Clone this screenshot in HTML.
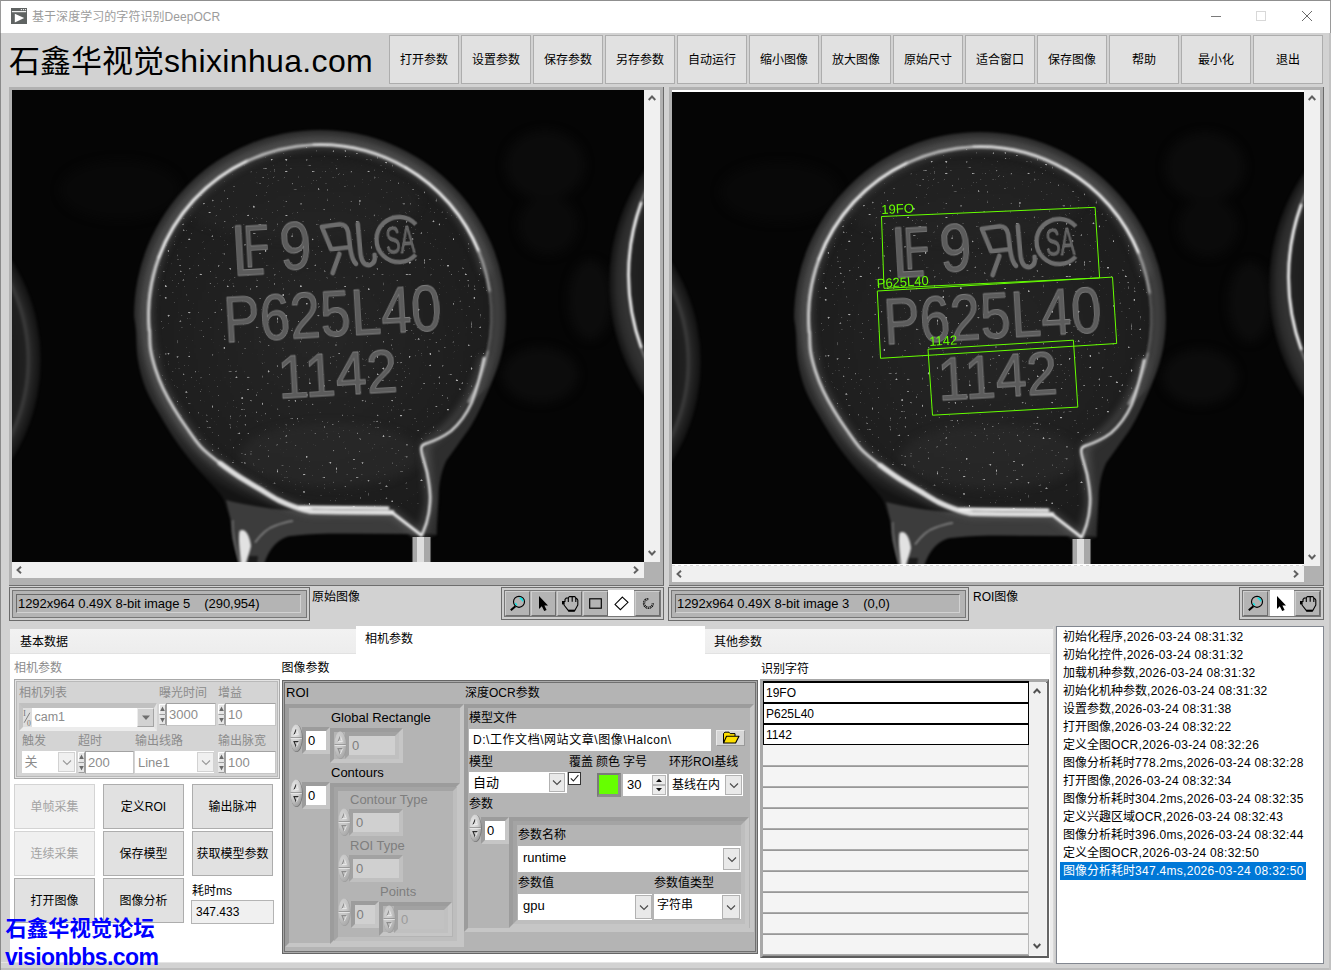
<!DOCTYPE html>
<html lang="zh-CN"><head><meta charset="utf-8"><title>DeepOCR</title>
<style>
*{box-sizing:border-box;margin:0;padding:0}
html,body{width:1331px;height:970px;overflow:hidden;background:#d2d2d2}
body{position:relative;font-family:"Liberation Sans","Noto Sans CJK SC",sans-serif;font-size:12px;color:#000;line-height:1}
.a{position:absolute}
.t{position:absolute;white-space:nowrap;line-height:16px;height:16px}
.tb{position:absolute;background:#e1e1e1;border:1px solid #adadad;text-align:center;font-size:12px;white-space:nowrap}
.dis{color:#8c8c8c}
</style></head>
<body>
<div class="a" style="left:0px;top:0px;width:1331px;height:970px;background:#d2d2d2"></div>
<div class="a" style="left:0px;top:0px;width:1331px;height:33px;background:#fff;border-top:1px solid #8f8f8f;border-left:1px solid #9a9a9a;border-right:1px solid #9a9a9a"></div>
<div class="a" style="left:0px;top:33px;width:1px;height:937px;background:#8a8a8a"></div>
<svg class="a" style="left:11px;top:8px" width="16" height="16" viewBox="0 0 16 16"><rect x="0" y="0" width="16" height="16" fill="#5f6362"/><circle cx="10.4" cy="1.6" r="0.7" fill="#fff"/><circle cx="12.5" cy="1.6" r="0.7" fill="#fff"/><circle cx="14.5" cy="1.6" r="0.7" fill="#fff"/><rect x="0.9" y="3.1" width="14.2" height="1.1" fill="#fff"/><path d="M3.8 5.8 L13.2 9.9 L3.8 14.4 Z" fill="#fff"/></svg>
<div class="t" style="left:32px;top:9px;color:#9c9c9c;font-size:12px;letter-spacing:0.05px">基于深度学习的字符识别DeepOCR</div>
<div class="a" style="left:1211px;top:16px;width:10px;height:1px;background:#7a7a7a"></div>
<div class="a" style="left:1256px;top:11px;width:10px;height:10px;border:1px solid #d8d8d8"></div>
<svg class="a" style="left:1301px;top:10px" width="12" height="12" viewBox="0 0 12 12"><path d="M1 1 L11 11 M11 1 L1 11" stroke="#6a6a6a" stroke-width="1" fill="none"/></svg>
<div class="a" style="left:9px;top:39px;font-size:32px;line-height:44px;height:44px;white-space:nowrap"><span style="font-size:31px">石鑫华视觉</span><span style="letter-spacing:0.35px">shixinhua.com</span></div>
<div class="tb" style="left:389px;top:35px;width:70px;height:49px;line-height:49px">打开参数</div>
<div class="tb" style="left:461px;top:35px;width:70px;height:49px;line-height:49px">设置参数</div>
<div class="tb" style="left:533px;top:35px;width:70px;height:49px;line-height:49px">保存参数</div>
<div class="tb" style="left:605px;top:35px;width:70px;height:49px;line-height:49px">另存参数</div>
<div class="tb" style="left:677px;top:35px;width:70px;height:49px;line-height:49px">自动运行</div>
<div class="tb" style="left:749px;top:35px;width:70px;height:49px;line-height:49px">缩小图像</div>
<div class="tb" style="left:821px;top:35px;width:70px;height:49px;line-height:49px">放大图像</div>
<div class="tb" style="left:893px;top:35px;width:70px;height:49px;line-height:49px">原始尺寸</div>
<div class="tb" style="left:965px;top:35px;width:70px;height:49px;line-height:49px">适合窗口</div>
<div class="tb" style="left:1037px;top:35px;width:70px;height:49px;line-height:49px">保存图像</div>
<div class="tb" style="left:1109px;top:35px;width:70px;height:49px;line-height:49px">帮助</div>
<div class="tb" style="left:1181px;top:35px;width:70px;height:49px;line-height:49px">最小化</div>
<div class="tb" style="left:1253px;top:35px;width:70px;height:49px;line-height:49px">退出</div>
<div class="a" style="left:9px;top:87px;width:655px;height:499px;background:#b1b1b1;border-right:1px solid #6a6a6a;border-bottom:1px solid #6e6e6e"></div>
<div class="a" style="left:12px;top:90px;width:632px;height:472px;overflow:hidden;background:#050505"><svg class="a" style="left:0;top:0" width="632" height="472" viewBox="0 0 632 472">
<defs>
<radialGradient id="gLd" cx="320" cy="316" r="198" gradientUnits="userSpaceOnUse">
<stop offset="0" stop-color="#292929"/><stop offset="0.55" stop-color="#252525"/><stop offset="0.84" stop-color="#222"/><stop offset="0.868" stop-color="#3a3a3a"/><stop offset="0.9" stop-color="#3e3e3e"/><stop offset="0.94" stop-color="#2a2a2a"/><stop offset="1" stop-color="#141414"/></radialGradient>
<radialGradient id="gLf" cx="320" cy="336" r="200" gradientUnits="userSpaceOnUse"><stop offset="0" stop-color="#262626"/><stop offset="0.6" stop-color="#202020"/><stop offset="1" stop-color="#1c1c1c"/></radialGradient>
<radialGradient id="gLs" cx="-145" cy="360" r="186" gradientUnits="userSpaceOnUse"><stop offset="0.8" stop-color="#1b1b1b"/><stop offset="0.915" stop-color="#202020"/><stop offset="0.93" stop-color="#3c3c3c"/><stop offset="0.95" stop-color="#262626"/><stop offset="1" stop-color="#101010"/></radialGradient>
<radialGradient id="gLr" cx="807" cy="283" r="198" gradientUnits="userSpaceOnUse"><stop offset="0.8" stop-color="#1c1c1c"/><stop offset="0.89" stop-color="#222"/><stop offset="0.92" stop-color="#343434"/><stop offset="0.96" stop-color="#2a2a2a"/><stop offset="1" stop-color="#121212"/></radialGradient>
<filter id="gLb" color-interpolation-filters="sRGB" x="-10%" y="-10%" width="120%" height="120%"><feGaussianBlur stdDeviation="0.9"/></filter>
<filter id="gLb2" color-interpolation-filters="sRGB" x="-20%" y="-20%" width="140%" height="140%"><feGaussianBlur stdDeviation="4"/></filter>
<filter id="gLt" color-interpolation-filters="sRGB" x="-5%" y="-5%" width="110%" height="110%"><feGaussianBlur stdDeviation="0.6"/></filter>
<filter id="gLn" color-interpolation-filters="sRGB" x="0" y="0" width="100%" height="100%"><feTurbulence type="fractalNoise" baseFrequency="0.34" numOctaves="1" seed="11" result="n"/><feColorMatrix in="n" type="matrix" values="0 0 0 0 1  0 0 0 0 1  0 0 0 0 1  10 0 0 0 -7.05" result="m"/><feGaussianBlur in="m" stdDeviation="0.45"/></filter>
<filter id="gLn2" color-interpolation-filters="sRGB" x="0" y="0" width="100%" height="100%"><feTurbulence type="fractalNoise" baseFrequency="0.8" numOctaves="1" seed="3" result="n"/><feColorMatrix in="n" type="matrix" values="0 0 0 0 1  0 0 0 0 1  0 0 0 0 1  0 2 0 0 -0.9"/></filter>
<clipPath id="gLc"><path d="M153 331 A168.5 168.5 0 1 1 484.75 351 C476 392 459 424 423 441 L427 503 L420 530 L392 509 L300 505 C262 487 225 462 205 447 C185 425 170 400 160 372 C156 358 153 345 153 331 Z"/></clipPath>
</defs>
<rect width="632" height="472" fill="#050505"/>
<g transform="translate(-12,-90)">
<g filter="url(#gLb2)"><ellipse cx="545" cy="165" rx="40" ry="35" fill="#0b0b0b"/><ellipse cx="548" cy="225" rx="30" ry="30" fill="#0a0a0a"/><ellipse cx="590" cy="300" rx="22" ry="40" fill="#0c0c0c"/><ellipse cx="540" cy="375" rx="38" ry="28" fill="#0c0c0c"/><ellipse cx="120" cy="190" rx="60" ry="30" fill="#080808"/></g>
<g filter="url(#gLb)"><circle cx="-145" cy="360" r="186" fill="url(#gLs)"/></g>
<g filter="url(#gLb)"><circle cx="807" cy="283" r="198" fill="url(#gLr)"/>
<path d="M650 181 A213 213 0 0 0 650 369" fill="none" stroke="#707070" stroke-width="2.6"/><path d="M641.5 202 A213 213 0 0 0 641.5 348" fill="none" stroke="#f2f2f2" stroke-width="2.8"/></g>
<g filter="url(#gLb)"><path d="M134 316 A186 186 0 0 1 506 316 C506 345 499 366 491 384 C484 400 478 414 471 426 C462 440 452 452 446 461 C441 472 439 484 438.5 497 L436.5 535 L431 538 L431 564 L412 564 L412 538 L408 534 C400 533 394 532.5 390 532.5 L330 533.5 C310 534 300 535 290 536 C280 538 270 546 264 564 L239 564 L232.4 538.6 L230.4 519 L230.4 519.0 C229.8 517.5 228.4 513.8 227.0 510.0 C225.6 506.2 225.1 501.4 222.0 496.5 C218.9 491.6 213.3 486.4 208.4 480.8 C203.5 475.2 198.3 470.1 192.7 463.2 C187.1 456.3 180.6 447.9 175.0 439.7 C169.4 431.5 164.3 422.7 159.4 414.2 C154.5 405.7 149.3 397.9 145.7 388.8 C142.1 379.7 139.4 369.2 137.8 359.4 C136.2 349.6 136.5 337.2 135.9 330.0 C135.3 322.8 134.3 318.3 134.0 316.0 Z" fill="url(#gLd)"/>
<path d="M149.6 330 A171.5 171.5 0 1 1 487.75 351.66 C480 378 476 392 471.5 403 C466 415 459 424 451 431 C443 437 434 441 425 444 L422.5 456 L427 472 C429.5 485 431 494 430 503 C429.5 512 428 518 426.5 523 L422 535 L392 512.5 L338 512 L312.0 511.5 C309.8 511.0 304.0 510.2 298.5 508.3 C293.0 506.4 285.4 503.7 278.9 500.4 C272.4 497.1 265.8 492.6 259.3 488.7 C252.8 484.8 246.2 481.2 239.7 477.0 C233.1 472.8 226.4 468.1 220.0 463.2 C213.6 458.3 207.0 453.4 201.5 447.5 C196.0 441.6 191.4 434.5 186.8 428.0 C182.2 421.5 177.9 414.9 174.0 408.4 C170.1 401.9 166.4 395.3 163.3 388.8 C160.2 382.3 157.6 375.7 155.5 369.2 C153.4 362.7 151.6 356.1 150.6 349.6 C149.6 343.1 149.8 333.3 149.6 330.0 Z" fill="url(#gLf)"/>
<path d="M226 500 C245 505 270 509 290 510 L392 513 L418 536 L408 534 L330 533.5 C310 534 300 535 290 536 C280 538 270 546 264 564 L239 564 L232.4 538.6 L230.4 519 Z" fill="#3c3c3c"/>
<path d="M426 446 C452 434 466 416 474 400 L489 386 C478 412 462 440 446 461 C441 472 439 484 438.5 497 L436.5 535 L424 533 C430 520 432 505 430 490 Z" fill="#2e2e2e"/>
</g>
<g filter="url(#gLb2)" clip-path="url(#gLc)"><ellipse cx="330" cy="455" rx="90" ry="32" fill="#323232" opacity="0.4"/><ellipse cx="300" cy="200" rx="120" ry="40" fill="#2a2a2a" opacity="0.3"/></g>
<rect x="140" y="136" width="360" height="372" filter="url(#gLn)" clip-path="url(#gLc)" opacity="0.62"/>
<g filter="url(#gLb2)" fill="none" stroke-linecap="round" opacity="0.55"><path d="M154.3 360.4 A171.5 171.5 0 0 1 485.7 271.6" stroke="#8a8a8a" stroke-width="5" opacity="1"/><path d="M149.6 330.0 C149.8 333.3 149.6 343.1 150.6 349.6 C151.6 356.1 153.4 362.7 155.5 369.2 C157.6 375.7 160.2 382.3 163.3 388.8 C166.4 395.3 170.1 401.9 174.0 408.4 C177.9 414.9 182.2 421.5 186.8 428.0 C191.4 434.5 196.0 441.6 201.5 447.5 C207.0 453.4 213.6 458.3 220.0 463.2 C226.4 468.1 233.1 472.8 239.7 477.0 C246.2 481.2 252.8 484.8 259.3 488.7 C265.8 492.6 272.4 497.1 278.9 500.4 C285.4 503.7 293.0 506.4 298.5 508.3 C304.0 510.2 309.8 511.0 312.0 511.5 L392 512 L421 535 M484 358 C476 392 459 424 425 444 L430 503 L422 535" stroke="#8a8a8a" stroke-width="5"/></g>
<g filter="url(#gLb)" fill="none" stroke-linecap="round">
<path d="M149.1 330.1 A171.5 171.5 0 0 1 489.8 292.1" stroke="#6e6e6e" stroke-width="3.2" opacity="1"/>
<path d="M149.1 330.1 A171.5 171.5 0 0 1 158.8 257.3" stroke="#cfcfcf" stroke-width="2.9" opacity="1"/>
<path d="M158.8 257.3 A171.5 171.5 0 0 1 247.5 160.6" stroke="#e8e8e8" stroke-width="3" opacity="1"/>
<path d="M247.5 160.6 A171.5 171.5 0 0 1 314.0 144.6" stroke="#bcbcbc" stroke-width="2.6" opacity="1"/>
<path d="M314.0 144.6 A171.5 171.5 0 0 1 405.8 167.5" stroke="#dadada" stroke-width="2.8" opacity="1"/>
<path d="M405.8 167.5 A171.5 171.5 0 0 1 479.0 251.8" stroke="#ededed" stroke-width="3" opacity="1"/>
<path d="M479.0 251.8 A171.5 171.5 0 0 1 489.8 292.1" stroke="#9c9c9c" stroke-width="2.4" opacity="1"/>
<path d="M489.8 292.1 A171.5 171.5 0 0 1 487.8 351.7" stroke="#5c5c5c" stroke-width="2.4" opacity="1"/>
<path d="M487.8 351.7 A171.5 171.5 0 0 1 468.5 401.8" stroke="#8c8c8c" stroke-width="2.4" opacity="1"/>
<path d="M484 358 C480 378 476 392 471.5 403 C466 415 459 424 451 431 C443 437 434 441 425 444" stroke="#d8d8d8" stroke-width="2.6"/>
<path d="M425 444 C420 445 421 450 422.5 456 L427 472 C429.5 485 431 494 430 503 C429.5 512 428 518 426.5 523 L422 535" stroke="#e2e2e2" stroke-width="2.6"/>
<path d="M149.6 330.0 C149.8 333.3 149.6 343.1 150.6 349.6 C151.6 356.1 153.4 362.7 155.5 369.2 C157.6 375.7 160.2 382.3 163.3 388.8 C166.4 395.3 170.1 401.9 174.0 408.4 C177.9 414.9 182.2 421.5 186.8 428.0 C191.4 434.5 196.0 441.6 201.5 447.5 C207.0 453.4 216.9 460.6 220.0 463.2 " stroke="#cdcdcd" stroke-width="3"/>
<path d="M220.0 463.2 C223.3 465.5 233.1 472.8 239.7 477.0 C246.2 481.2 252.8 484.8 259.3 488.7 C265.8 492.6 272.4 497.1 278.9 500.4 C285.4 503.7 293.0 506.4 298.5 508.3 C304.0 510.2 309.8 511.0 312.0 511.5 L338 512 L392 512.5" stroke="#dedede" stroke-width="5.2"/><path d="M392 512.5 L421 535" stroke="#e6e6e6" stroke-width="3.4"/>
<path d="M300 507 L388 508" stroke="#f4f4f4" stroke-width="3"/>
</g>
<g filter="url(#gLt)"><rect x="412.5" y="537" width="18" height="28" fill="#a8a8a8"/><rect x="417" y="537" width="7" height="28" fill="#dedede"/></g>
<g filter="url(#gLb)"><path d="M239.5 531 C245 527 250 536 251 546 C250 552 247 558 246 564 L241 564 C240 552 238 540 239.5 531 Z" fill="#e2e2e2"/><path d="M233 520 C232 535 236 550 240 564" fill="none" stroke="#6a6a6a" stroke-width="1.6"/><path d="M255 542.5 C262 533 268 528 274.5 526 C282 523 288 521.5 293 521" fill="none" stroke="#8c8c8c" stroke-width="1.4"/><path d="M249 556 L258 556 L257 564 L248 564 Z" fill="#1a1a1a"/></g>
<g filter="url(#gLt)" transform="rotate(-3.3 320 316)">
<text x="236" y="271.5" font-size="72" textLength="32" lengthAdjust="spacingAndGlyphs" fill="#5c5c5c" stroke="#7e7e7e" stroke-width="0.8" stroke-linejoin="round" font-family="Liberation Sans, sans-serif">L</text>
<text x="247.5" y="263" font-size="59" textLength="26" lengthAdjust="spacingAndGlyphs" fill="#5c5c5c" stroke="#7e7e7e" stroke-width="0.8" stroke-linejoin="round" font-family="Liberation Sans, sans-serif">F</text>
<text x="283.5" y="268.5" font-size="69" textLength="32" lengthAdjust="spacingAndGlyphs" fill="#5c5c5c" stroke="#7e7e7e" stroke-width="0.8" stroke-linejoin="round" font-family="Liberation Sans, sans-serif">9</text>
<path d="M327 227 L345 225.5 Q352 226 353 234 L354 249 L335 250 Z M343 255 L335 274 M354 249 Q355 262 359 266 M363 226 L364 256 Q365 269 373 268 Q379 266 378 258" fill="none" stroke="#6c6c6c" stroke-width="4.6" stroke-linejoin="round" stroke-linecap="round"/>
<path d="M420.96 230.26 A22.5 22.5 0 1 0 419.1 260.2" fill="none" stroke="#6c6c6c" stroke-width="4.4"/>
<text x="390" y="258.3" font-size="39" textLength="29" lengthAdjust="spacingAndGlyphs" fill="#606060" stroke="#808080" stroke-width="0.6" font-family="Liberation Sans, sans-serif">SA</text>
<text x="223.5" y="336.8" font-size="64.5" textLength="218" lengthAdjust="spacingAndGlyphs" fill="#5c5c5c" stroke="#7e7e7e" stroke-width="0.8" stroke-linejoin="round" font-family="Liberation Sans, sans-serif">P625L40</text>
<text x="274" y="395.6" font-size="61" textLength="120" lengthAdjust="spacingAndGlyphs" fill="#5c5c5c" stroke="#7e7e7e" stroke-width="0.8" stroke-linejoin="round" font-family="Liberation Sans, sans-serif">1142</text>
</g>
</g>
</svg></div>
<div class="a" style="left:644px;top:90px;width:16px;height:472px;background:#f0f0f0"></div>
<div class="a" style="left:12px;top:562px;width:632px;height:16px;background:#f0f0f0"></div>
<svg class="a" style="left:646px;top:92px" width="12" height="12" viewBox="-6 -6 12 12"><path d="M-3.3 2 L0 -1.5 L3.3 2" fill="none" stroke="#606060" stroke-width="1.9"/></svg>
<svg class="a" style="left:646px;top:547px" width="12" height="12" viewBox="-6 -6 12 12"><path d="M-3.3 -2 L0 1.5 L3.3 -2" fill="none" stroke="#606060" stroke-width="1.9"/></svg>
<svg class="a" style="left:13px;top:564px" width="12" height="12" viewBox="-6 -6 12 12"><path d="M2 -3.3 L-1.5 0 L2 3.3" fill="none" stroke="#606060" stroke-width="1.9"/></svg>
<svg class="a" style="left:630px;top:564px" width="12" height="12" viewBox="-6 -6 12 12"><path d="M-2 -3.3 L1.5 0 L-2 3.3" fill="none" stroke="#606060" stroke-width="1.9"/></svg>
<div class="a" style="left:669px;top:87px;width:655px;height:499px;background:#b1b1b1;border-right:1px solid #6a6a6a;border-bottom:1px solid #6e6e6e"></div>
<div class="a" style="left:672px;top:90px;width:632px;height:476px;background:#fff"></div>
<div class="a" style="left:672px;top:92px;width:632px;height:472px;overflow:hidden;background:#050505"><svg class="a" style="left:0;top:0" width="632" height="472" viewBox="0 0 632 472">
<defs>
<radialGradient id="gRd" cx="320" cy="316" r="198" gradientUnits="userSpaceOnUse">
<stop offset="0" stop-color="#292929"/><stop offset="0.55" stop-color="#252525"/><stop offset="0.84" stop-color="#222"/><stop offset="0.868" stop-color="#3a3a3a"/><stop offset="0.9" stop-color="#3e3e3e"/><stop offset="0.94" stop-color="#2a2a2a"/><stop offset="1" stop-color="#141414"/></radialGradient>
<radialGradient id="gRf" cx="320" cy="336" r="200" gradientUnits="userSpaceOnUse"><stop offset="0" stop-color="#262626"/><stop offset="0.6" stop-color="#202020"/><stop offset="1" stop-color="#1c1c1c"/></radialGradient>
<radialGradient id="gRs" cx="-145" cy="360" r="186" gradientUnits="userSpaceOnUse"><stop offset="0.8" stop-color="#1b1b1b"/><stop offset="0.915" stop-color="#202020"/><stop offset="0.93" stop-color="#3c3c3c"/><stop offset="0.95" stop-color="#262626"/><stop offset="1" stop-color="#101010"/></radialGradient>
<radialGradient id="gRr" cx="807" cy="283" r="198" gradientUnits="userSpaceOnUse"><stop offset="0.8" stop-color="#1c1c1c"/><stop offset="0.89" stop-color="#222"/><stop offset="0.92" stop-color="#343434"/><stop offset="0.96" stop-color="#2a2a2a"/><stop offset="1" stop-color="#121212"/></radialGradient>
<filter id="gRb" color-interpolation-filters="sRGB" x="-10%" y="-10%" width="120%" height="120%"><feGaussianBlur stdDeviation="0.9"/></filter>
<filter id="gRb2" color-interpolation-filters="sRGB" x="-20%" y="-20%" width="140%" height="140%"><feGaussianBlur stdDeviation="4"/></filter>
<filter id="gRt" color-interpolation-filters="sRGB" x="-5%" y="-5%" width="110%" height="110%"><feGaussianBlur stdDeviation="0.6"/></filter>
<filter id="gRn" color-interpolation-filters="sRGB" x="0" y="0" width="100%" height="100%"><feTurbulence type="fractalNoise" baseFrequency="0.34" numOctaves="1" seed="11" result="n"/><feColorMatrix in="n" type="matrix" values="0 0 0 0 1  0 0 0 0 1  0 0 0 0 1  10 0 0 0 -7.05" result="m"/><feGaussianBlur in="m" stdDeviation="0.45"/></filter>
<filter id="gRn2" color-interpolation-filters="sRGB" x="0" y="0" width="100%" height="100%"><feTurbulence type="fractalNoise" baseFrequency="0.8" numOctaves="1" seed="3" result="n"/><feColorMatrix in="n" type="matrix" values="0 0 0 0 1  0 0 0 0 1  0 0 0 0 1  0 2 0 0 -0.9"/></filter>
<clipPath id="gRc"><path d="M153 331 A168.5 168.5 0 1 1 484.75 351 C476 392 459 424 423 441 L427 503 L420 530 L392 509 L300 505 C262 487 225 462 205 447 C185 425 170 400 160 372 C156 358 153 345 153 331 Z"/></clipPath>
</defs>
<rect width="632" height="472" fill="#050505"/>
<g transform="translate(-12,-90)">
<g filter="url(#gRb2)"><ellipse cx="545" cy="165" rx="40" ry="35" fill="#0b0b0b"/><ellipse cx="548" cy="225" rx="30" ry="30" fill="#0a0a0a"/><ellipse cx="590" cy="300" rx="22" ry="40" fill="#0c0c0c"/><ellipse cx="540" cy="375" rx="38" ry="28" fill="#0c0c0c"/><ellipse cx="120" cy="190" rx="60" ry="30" fill="#080808"/></g>
<g filter="url(#gRb)"><circle cx="-145" cy="360" r="186" fill="url(#gRs)"/></g>
<g filter="url(#gRb)"><circle cx="807" cy="283" r="198" fill="url(#gRr)"/>
<path d="M650 181 A213 213 0 0 0 650 369" fill="none" stroke="#707070" stroke-width="2.6"/><path d="M641.5 202 A213 213 0 0 0 641.5 348" fill="none" stroke="#f2f2f2" stroke-width="2.8"/></g>
<g filter="url(#gRb)"><path d="M134 316 A186 186 0 0 1 506 316 C506 345 499 366 491 384 C484 400 478 414 471 426 C462 440 452 452 446 461 C441 472 439 484 438.5 497 L436.5 535 L431 538 L431 564 L412 564 L412 538 L408 534 C400 533 394 532.5 390 532.5 L330 533.5 C310 534 300 535 290 536 C280 538 270 546 264 564 L239 564 L232.4 538.6 L230.4 519 L230.4 519.0 C229.8 517.5 228.4 513.8 227.0 510.0 C225.6 506.2 225.1 501.4 222.0 496.5 C218.9 491.6 213.3 486.4 208.4 480.8 C203.5 475.2 198.3 470.1 192.7 463.2 C187.1 456.3 180.6 447.9 175.0 439.7 C169.4 431.5 164.3 422.7 159.4 414.2 C154.5 405.7 149.3 397.9 145.7 388.8 C142.1 379.7 139.4 369.2 137.8 359.4 C136.2 349.6 136.5 337.2 135.9 330.0 C135.3 322.8 134.3 318.3 134.0 316.0 Z" fill="url(#gRd)"/>
<path d="M149.6 330 A171.5 171.5 0 1 1 487.75 351.66 C480 378 476 392 471.5 403 C466 415 459 424 451 431 C443 437 434 441 425 444 L422.5 456 L427 472 C429.5 485 431 494 430 503 C429.5 512 428 518 426.5 523 L422 535 L392 512.5 L338 512 L312.0 511.5 C309.8 511.0 304.0 510.2 298.5 508.3 C293.0 506.4 285.4 503.7 278.9 500.4 C272.4 497.1 265.8 492.6 259.3 488.7 C252.8 484.8 246.2 481.2 239.7 477.0 C233.1 472.8 226.4 468.1 220.0 463.2 C213.6 458.3 207.0 453.4 201.5 447.5 C196.0 441.6 191.4 434.5 186.8 428.0 C182.2 421.5 177.9 414.9 174.0 408.4 C170.1 401.9 166.4 395.3 163.3 388.8 C160.2 382.3 157.6 375.7 155.5 369.2 C153.4 362.7 151.6 356.1 150.6 349.6 C149.6 343.1 149.8 333.3 149.6 330.0 Z" fill="url(#gRf)"/>
<path d="M226 500 C245 505 270 509 290 510 L392 513 L418 536 L408 534 L330 533.5 C310 534 300 535 290 536 C280 538 270 546 264 564 L239 564 L232.4 538.6 L230.4 519 Z" fill="#3c3c3c"/>
<path d="M426 446 C452 434 466 416 474 400 L489 386 C478 412 462 440 446 461 C441 472 439 484 438.5 497 L436.5 535 L424 533 C430 520 432 505 430 490 Z" fill="#2e2e2e"/>
</g>
<g filter="url(#gRb2)" clip-path="url(#gRc)"><ellipse cx="330" cy="455" rx="90" ry="32" fill="#323232" opacity="0.4"/><ellipse cx="300" cy="200" rx="120" ry="40" fill="#2a2a2a" opacity="0.3"/></g>
<rect x="140" y="136" width="360" height="372" filter="url(#gRn)" clip-path="url(#gRc)" opacity="0.62"/>
<g filter="url(#gRb2)" fill="none" stroke-linecap="round" opacity="0.55"><path d="M154.3 360.4 A171.5 171.5 0 0 1 485.7 271.6" stroke="#8a8a8a" stroke-width="5" opacity="1"/><path d="M149.6 330.0 C149.8 333.3 149.6 343.1 150.6 349.6 C151.6 356.1 153.4 362.7 155.5 369.2 C157.6 375.7 160.2 382.3 163.3 388.8 C166.4 395.3 170.1 401.9 174.0 408.4 C177.9 414.9 182.2 421.5 186.8 428.0 C191.4 434.5 196.0 441.6 201.5 447.5 C207.0 453.4 213.6 458.3 220.0 463.2 C226.4 468.1 233.1 472.8 239.7 477.0 C246.2 481.2 252.8 484.8 259.3 488.7 C265.8 492.6 272.4 497.1 278.9 500.4 C285.4 503.7 293.0 506.4 298.5 508.3 C304.0 510.2 309.8 511.0 312.0 511.5 L392 512 L421 535 M484 358 C476 392 459 424 425 444 L430 503 L422 535" stroke="#8a8a8a" stroke-width="5"/></g>
<g filter="url(#gRb)" fill="none" stroke-linecap="round">
<path d="M149.1 330.1 A171.5 171.5 0 0 1 489.8 292.1" stroke="#6e6e6e" stroke-width="3.2" opacity="1"/>
<path d="M149.1 330.1 A171.5 171.5 0 0 1 158.8 257.3" stroke="#cfcfcf" stroke-width="2.9" opacity="1"/>
<path d="M158.8 257.3 A171.5 171.5 0 0 1 247.5 160.6" stroke="#e8e8e8" stroke-width="3" opacity="1"/>
<path d="M247.5 160.6 A171.5 171.5 0 0 1 314.0 144.6" stroke="#bcbcbc" stroke-width="2.6" opacity="1"/>
<path d="M314.0 144.6 A171.5 171.5 0 0 1 405.8 167.5" stroke="#dadada" stroke-width="2.8" opacity="1"/>
<path d="M405.8 167.5 A171.5 171.5 0 0 1 479.0 251.8" stroke="#ededed" stroke-width="3" opacity="1"/>
<path d="M479.0 251.8 A171.5 171.5 0 0 1 489.8 292.1" stroke="#9c9c9c" stroke-width="2.4" opacity="1"/>
<path d="M489.8 292.1 A171.5 171.5 0 0 1 487.8 351.7" stroke="#5c5c5c" stroke-width="2.4" opacity="1"/>
<path d="M487.8 351.7 A171.5 171.5 0 0 1 468.5 401.8" stroke="#8c8c8c" stroke-width="2.4" opacity="1"/>
<path d="M484 358 C480 378 476 392 471.5 403 C466 415 459 424 451 431 C443 437 434 441 425 444" stroke="#d8d8d8" stroke-width="2.6"/>
<path d="M425 444 C420 445 421 450 422.5 456 L427 472 C429.5 485 431 494 430 503 C429.5 512 428 518 426.5 523 L422 535" stroke="#e2e2e2" stroke-width="2.6"/>
<path d="M149.6 330.0 C149.8 333.3 149.6 343.1 150.6 349.6 C151.6 356.1 153.4 362.7 155.5 369.2 C157.6 375.7 160.2 382.3 163.3 388.8 C166.4 395.3 170.1 401.9 174.0 408.4 C177.9 414.9 182.2 421.5 186.8 428.0 C191.4 434.5 196.0 441.6 201.5 447.5 C207.0 453.4 216.9 460.6 220.0 463.2 " stroke="#cdcdcd" stroke-width="3"/>
<path d="M220.0 463.2 C223.3 465.5 233.1 472.8 239.7 477.0 C246.2 481.2 252.8 484.8 259.3 488.7 C265.8 492.6 272.4 497.1 278.9 500.4 C285.4 503.7 293.0 506.4 298.5 508.3 C304.0 510.2 309.8 511.0 312.0 511.5 L338 512 L392 512.5" stroke="#dedede" stroke-width="5.2"/><path d="M392 512.5 L421 535" stroke="#e6e6e6" stroke-width="3.4"/>
<path d="M300 507 L388 508" stroke="#f4f4f4" stroke-width="3"/>
</g>
<g filter="url(#gRt)"><rect x="412.5" y="537" width="18" height="28" fill="#a8a8a8"/><rect x="417" y="537" width="7" height="28" fill="#dedede"/></g>
<g filter="url(#gRb)"><path d="M239.5 531 C245 527 250 536 251 546 C250 552 247 558 246 564 L241 564 C240 552 238 540 239.5 531 Z" fill="#e2e2e2"/><path d="M233 520 C232 535 236 550 240 564" fill="none" stroke="#6a6a6a" stroke-width="1.6"/><path d="M255 542.5 C262 533 268 528 274.5 526 C282 523 288 521.5 293 521" fill="none" stroke="#8c8c8c" stroke-width="1.4"/><path d="M249 556 L258 556 L257 564 L248 564 Z" fill="#1a1a1a"/></g>
<g filter="url(#gRt)" transform="rotate(-3.3 320 316)">
<text x="236" y="271.5" font-size="72" textLength="32" lengthAdjust="spacingAndGlyphs" fill="#5c5c5c" stroke="#7e7e7e" stroke-width="0.8" stroke-linejoin="round" font-family="Liberation Sans, sans-serif">L</text>
<text x="247.5" y="263" font-size="59" textLength="26" lengthAdjust="spacingAndGlyphs" fill="#5c5c5c" stroke="#7e7e7e" stroke-width="0.8" stroke-linejoin="round" font-family="Liberation Sans, sans-serif">F</text>
<text x="283.5" y="268.5" font-size="69" textLength="32" lengthAdjust="spacingAndGlyphs" fill="#5c5c5c" stroke="#7e7e7e" stroke-width="0.8" stroke-linejoin="round" font-family="Liberation Sans, sans-serif">9</text>
<path d="M327 227 L345 225.5 Q352 226 353 234 L354 249 L335 250 Z M343 255 L335 274 M354 249 Q355 262 359 266 M363 226 L364 256 Q365 269 373 268 Q379 266 378 258" fill="none" stroke="#6c6c6c" stroke-width="4.6" stroke-linejoin="round" stroke-linecap="round"/>
<path d="M420.96 230.26 A22.5 22.5 0 1 0 419.1 260.2" fill="none" stroke="#6c6c6c" stroke-width="4.4"/>
<text x="390" y="258.3" font-size="39" textLength="29" lengthAdjust="spacingAndGlyphs" fill="#606060" stroke="#808080" stroke-width="0.6" font-family="Liberation Sans, sans-serif">SA</text>
<text x="223.5" y="336.8" font-size="64.5" textLength="218" lengthAdjust="spacingAndGlyphs" fill="#5c5c5c" stroke="#7e7e7e" stroke-width="0.8" stroke-linejoin="round" font-family="Liberation Sans, sans-serif">P625L40</text>
<text x="274" y="395.6" font-size="61" textLength="120" lengthAdjust="spacingAndGlyphs" fill="#5c5c5c" stroke="#7e7e7e" stroke-width="0.8" stroke-linejoin="round" font-family="Liberation Sans, sans-serif">1142</text>
</g>
</g>
<g fill="none" stroke="#66ff00" stroke-width="1">
<polygon points="209.5,124.5 423.1,115.3 427.6,185.9 212.0,196.3"/>
<polygon points="205.3,199.0 440.5,185.1 444.7,251.5 208.5,266.3"/>
<polygon points="256.0,257.2 401.4,248.2 405.8,315.1 260.5,323.2"/>
</g>
<text x="209.5" y="122" transform="rotate(-2.5 209.5 122)" fill="#66ff00" font-family="Liberation Sans, sans-serif" font-size="13">19FO</text>
<text x="205" y="196" transform="rotate(-3.4 205 196)" fill="#66ff00" font-family="Liberation Sans, sans-serif" font-size="13">P625L40</text>
<text x="257.5" y="254" transform="rotate(-3.5 257.5 254)" fill="#66ff00" font-family="Liberation Sans, sans-serif" font-size="13">1142</text>
</svg></div>
<div class="a" style="left:672px;top:565px;width:632px;height:1px;background:repeating-linear-gradient(90deg,#d8d8d8 0 3px,#fff 3px 6px)"></div>
<div class="a" style="left:1304px;top:90px;width:16px;height:476px;background:#f0f0f0"></div>
<div class="a" style="left:672px;top:566px;width:632px;height:16px;background:#f0f0f0"></div>
<svg class="a" style="left:1306px;top:92px" width="12" height="12" viewBox="-6 -6 12 12"><path d="M-3.3 2 L0 -1.5 L3.3 2" fill="none" stroke="#606060" stroke-width="1.9"/></svg>
<svg class="a" style="left:1306px;top:551px" width="12" height="12" viewBox="-6 -6 12 12"><path d="M-3.3 -2 L0 1.5 L3.3 -2" fill="none" stroke="#606060" stroke-width="1.9"/></svg>
<svg class="a" style="left:673px;top:568px" width="12" height="12" viewBox="-6 -6 12 12"><path d="M2 -3.3 L-1.5 0 L2 3.3" fill="none" stroke="#606060" stroke-width="1.9"/></svg>
<svg class="a" style="left:1290px;top:568px" width="12" height="12" viewBox="-6 -6 12 12"><path d="M-2 -3.3 L1.5 0 L-2 3.3" fill="none" stroke="#606060" stroke-width="1.9"/></svg>
<div class="a" style="left:9px;top:587px;width:301px;height:34px;background:#b4b4b4;border:1px solid #6b6b6b;box-shadow:inset 0 0 0 1px #cdcdcd, inset 0 0 0 2px #cdcdcd, inset 0 0 0 3px #777"></div>
<div class="a" style="left:16px;top:594px;width:285px;height:19px;background:#b4b4b4;border:1px solid #6a6a6a;border-right-color:#d2d2d2;border-bottom-color:#d2d2d2"></div>
<div class="t" style="left:18px;top:595px;font-size:13px;line-height:17px;height:17px;white-space:pre;letter-spacing:-0.05px">1292x964 0.49X 8-bit image 5    (290,954)</div>
<div class="t" style="left:312px;top:589px;font-size:12px">原始图像</div>
<div class="a" style="left:501px;top:587px;width:163px;height:33px;background:#b4b4b4;border:1px solid #6b6b6b;box-shadow:inset 0 0 0 1px #cdcdcd, inset 0 0 0 2px #cdcdcd, inset 0 0 0 3px #777"></div>
<div class="a" style="left:505px;top:591px;width:25px;height:25px;background:#b4b4b4;border-right:1px solid #6e6e6e;border-bottom:1px solid #6e6e6e;border-left:1px solid #cfcfcf;border-top:1px solid #cfcfcf"></div>
<svg class="a" style="left:505px;top:591px" width="25" height="25" viewBox="0 0 25 25"><circle cx="14" cy="10.8" r="5.5" fill="none" stroke="#000" stroke-width="1.15"/><path d="M14.6 7 A3.9 3.9 0 0 1 17.8 10.4" stroke="#00e8e8" stroke-width="1.3" fill="none"/><path d="M10.4 12 A3.9 3.9 0 0 0 12 14.2" stroke="#00e8e8" stroke-width="1.3" fill="none"/><path d="M10.4 15.2 L5.8 19.2" stroke="#000" stroke-width="2.1"/></svg>
<div class="a" style="left:531px;top:591px;width:25px;height:25px;background:#b4b4b4;border-right:1px solid #6e6e6e;border-bottom:1px solid #6e6e6e;border-left:1px solid #cfcfcf;border-top:1px solid #cfcfcf"></div>
<svg class="a" style="left:531px;top:591px" width="25" height="25" viewBox="0 0 25 25"><path d="M8 5 L8 18 L10.8 15.2 L13.2 20 L15.6 19 L13.4 14.4 L17 14.4 Z" fill="#000"/></svg>
<div class="a" style="left:557px;top:591px;width:25px;height:25px;background:#b4b4b4;border-right:1px solid #6e6e6e;border-bottom:1px solid #6e6e6e;border-left:1px solid #cfcfcf;border-top:1px solid #cfcfcf"></div>
<svg class="a" style="left:557px;top:591px" width="25" height="25" viewBox="0 0 25 25"><path d="M7 10.5 L7 14 L11.2 19.4 L17.8 19.4 L20.8 14 L20.8 9 L19.8 7.6 L18.8 7.6 L18.8 6.6 L17.8 5.6 L12.4 5.6 L11.3 6.6 L11.3 7 L9.4 7 L8 8.4 L8 10.5 Z" fill="none" stroke="#000" stroke-width="1.1" stroke-linejoin="round"/><path d="M11.3 7 L11.3 11 M15.2 5.8 L15.2 10.8 M18.8 7.6 L18.8 11" stroke="#000" stroke-width="1.1" fill="none"/><rect x="5" y="10" width="2.2" height="3.4" fill="#000"/><rect x="11.2" y="18.9" width="6.6" height="1.9" fill="#000"/></svg>
<div class="a" style="left:583px;top:591px;width:25px;height:25px;background:#b4b4b4;border-right:1px solid #6e6e6e;border-bottom:1px solid #6e6e6e;border-left:1px solid #cfcfcf;border-top:1px solid #cfcfcf"></div>
<svg class="a" style="left:583px;top:591px" width="25" height="25" viewBox="0 0 25 25"><rect x="6.7" y="7.8" width="11.6" height="9.4" fill="none" stroke="#000" stroke-width="1.15"/></svg>
<div class="a" style="left:608px;top:590px;width:26px;height:26px;background:#fff"></div>
<svg class="a" style="left:609px;top:591px" width="25" height="25" viewBox="0 0 25 25"><path d="M13.4 6.1 L19 11.3 L11.4 18.7 L6 13.4 Z" fill="none" stroke="#000" stroke-width="1.05"/></svg>
<div class="a" style="left:635px;top:591px;width:25px;height:25px;background:#b4b4b4;border-right:1px solid #6e6e6e;border-bottom:1px solid #6e6e6e;border-left:1px solid #cfcfcf;border-top:1px solid #cfcfcf"></div>
<svg class="a" style="left:635px;top:591px" width="25" height="25" viewBox="0 0 25 25"><path d="M13.3 8 A4.4 4.4 0 1 0 17.8 12.2" fill="none" stroke="#000" stroke-width="2.2" stroke-dasharray="1.6 0.5"/><path d="M13.3 8 A4.4 4.4 0 1 0 17.8 12.2" fill="none" stroke="#b4b4b4" stroke-width="0.6"/></svg>
<div class="a" style="left:668px;top:587px;width:301px;height:34px;background:#b4b4b4;border:1px solid #6b6b6b;box-shadow:inset 0 0 0 1px #cdcdcd, inset 0 0 0 2px #cdcdcd, inset 0 0 0 3px #777"></div>
<div class="a" style="left:675px;top:594px;width:285px;height:19px;background:#b4b4b4;border:1px solid #6a6a6a;border-right-color:#d2d2d2;border-bottom-color:#d2d2d2"></div>
<div class="t" style="left:677px;top:595px;font-size:13px;line-height:17px;height:17px;white-space:pre;letter-spacing:-0.05px">1292x964 0.49X 8-bit image 3    (0,0)</div>
<div class="t" style="left:973px;top:589px;font-size:12px">ROI图像</div>
<div class="a" style="left:1239px;top:587px;width:85px;height:33px;background:#b4b4b4;border:1px solid #6b6b6b;box-shadow:inset 0 0 0 1px #cdcdcd, inset 0 0 0 2px #cdcdcd, inset 0 0 0 3px #777"></div>
<div class="a" style="left:1243px;top:591px;width:25px;height:25px;background:#b4b4b4;border-right:1px solid #6e6e6e;border-bottom:1px solid #6e6e6e;border-left:1px solid #cfcfcf;border-top:1px solid #cfcfcf"></div>
<svg class="a" style="left:1243px;top:591px" width="25" height="25" viewBox="0 0 25 25"><circle cx="14" cy="10.8" r="5.5" fill="none" stroke="#000" stroke-width="1.15"/><path d="M14.6 7 A3.9 3.9 0 0 1 17.8 10.4" stroke="#00e8e8" stroke-width="1.3" fill="none"/><path d="M10.4 12 A3.9 3.9 0 0 0 12 14.2" stroke="#00e8e8" stroke-width="1.3" fill="none"/><path d="M10.4 15.2 L5.8 19.2" stroke="#000" stroke-width="2.1"/></svg>
<div class="a" style="left:1270px;top:590px;width:24px;height:26px;background:#fff"></div>
<svg class="a" style="left:1269px;top:591px" width="25" height="25" viewBox="0 0 25 25"><path d="M8 5 L8 18 L10.8 15.2 L13.2 20 L15.6 19 L13.4 14.4 L17 14.4 Z" fill="#000"/></svg>
<div class="a" style="left:1295px;top:591px;width:25px;height:25px;background:#b4b4b4;border-right:1px solid #6e6e6e;border-bottom:1px solid #6e6e6e;border-left:1px solid #cfcfcf;border-top:1px solid #cfcfcf"></div>
<svg class="a" style="left:1295px;top:591px" width="25" height="25" viewBox="0 0 25 25"><path d="M7 10.5 L7 14 L11.2 19.4 L17.8 19.4 L20.8 14 L20.8 9 L19.8 7.6 L18.8 7.6 L18.8 6.6 L17.8 5.6 L12.4 5.6 L11.3 6.6 L11.3 7 L9.4 7 L8 8.4 L8 10.5 Z" fill="none" stroke="#000" stroke-width="1.1" stroke-linejoin="round"/><path d="M11.3 7 L11.3 11 M15.2 5.8 L15.2 10.8 M18.8 7.6 L18.8 11" stroke="#000" stroke-width="1.1" fill="none"/><rect x="5" y="10" width="2.2" height="3.4" fill="#000"/><rect x="11.2" y="18.9" width="6.6" height="1.9" fill="#000"/></svg>
<div class="a" style="left:10px;top:653px;width:1043px;height:309px;background:#fff"></div>
<div class="a" style="left:356px;top:626px;width:349px;height:28px;background:#fff"></div>
<div class="a" style="left:10px;top:629px;width:346px;height:25px;background:linear-gradient(#f2f2f2,#ededed);border-bottom:1px solid #e2e2e2"></div>
<div class="a" style="left:705px;top:629px;width:348px;height:25px;background:linear-gradient(#f2f2f2,#ededed);border-bottom:1px solid #e2e2e2"></div>
<div class="t" style="left:20px;top:634px;">基本数据</div>
<div class="t" style="left:365px;top:631px;">相机参数</div>
<div class="t" style="left:714px;top:634px;">其他参数</div>
<div class="a" style="left:1px;top:962px;width:1053px;height:1px;background:#e4e4e4"></div>
<div class="a" style="left:1050px;top:653px;width:3px;height:309px;background:#ececec"></div>
<div class="a" style="left:1053px;top:626px;width:3px;height:338px;background:linear-gradient(90deg,#dcdcdc,#c8c8c8)"></div>
<div class="a" style="left:1px;top:968px;width:1330px;height:2px;background:#bdbdbd"></div>
<div class="a" style="left:1329px;top:33px;width:2px;height:937px;background:#c2c2c2"></div>
<div class="t" style="left:14px;top:660px;color:#8c8c8c">相机参数</div>
<div class="a" style="left:14px;top:679px;width:266px;height:100px;background:#d4d4d4;border:1px solid #a8a8a8;box-shadow:inset 0 0 0 1px #e4e4e4, inset 0 0 0 2px #b9b9b9"></div>
<div class="t" style="left:19px;top:685px;color:#8c8c8c">相机列表</div>
<div class="t" style="left:159px;top:685px;color:#8c8c8c">曝光时间</div>
<div class="t" style="left:218px;top:685px;color:#8c8c8c">增益</div>
<div class="a" style="left:19px;top:703px;width:138px;height:28px;background:#d4d4d4;border-style:solid;border-width:5px 3px 4px 4px;border-color:#c0c0c0 #e2e2e2 #ececec #c4c4c4"></div>
<div class="a" style="left:23px;top:708px;width:9px;height:19px;background:#dedede"></div>
<svg class="a" style="left:22px;top:708px" width="10" height="19" viewBox="0 0 10 20"><text x="1" y="8" font-size="8" font-family="Liberation Serif, serif" fill="#6e6e6e">I</text><path d="M8 5 L2 15.5" stroke="#6e6e6e" stroke-width="0.9"/><text x="5" y="19" font-size="8" font-family="Liberation Serif, serif" fill="#6e6e6e">0</text></svg>
<div class="a" style="left:32px;top:708px;width:105px;height:19px;background:#fff"></div>
<div class="t" style="left:34.5px;top:709px;font-size:12.5px;color:#8c8c8c;line-height:17px">cam1</div>
<div class="a" style="left:137px;top:708px;width:17px;height:19px;background:#d2d2d2;border:1px solid #ececec;border-right-color:#a4a4a4;border-bottom-color:#a4a4a4"></div>
<svg class="a" style="left:140.5px;top:715px" width="10" height="6" viewBox="0 0 10 6"><path d="M1 0.5 L9 0.5 L5 5 Z" fill="#6e6e6e"/></svg>
<svg class="a" style="left:159px;top:704px" width="7" height="21" viewBox="0 0 7 21"><rect x="0" y="0" width="7" height="21" fill="#e6e6e6"/><path d="M0.5 9.5 L0.5 0.5 L6.5 0.5" stroke="#fff" fill="none"/><path d="M0.5 10.5 L6.5 10.5 L6.5 0.5" stroke="#8a8a8a" fill="none" stroke-width="0.8"/><path d="M0.5 20.5 L6.5 20.5 L6.5 11" stroke="#8a8a8a" fill="none" stroke-width="0.8"/><path d="M1.2 7 L3.5 2.5 L5.8 7 Z" fill="#6a6a6a"/><path d="M1.2 14 L3.5 18.5 L5.8 14 Z" fill="#6a6a6a"/></svg>
<div class="a" style="left:166px;top:703px;width:50px;height:23px;background:#fff;border:1px solid #c6c6c6;border-top-color:#a2a2a2;border-left-color:#a2a2a2"></div><div class="t" style="left:169px;top:705px;font-size:13px;line-height:19px;height:19px;color:#8c8c8c">3000</div>
<svg class="a" style="left:218px;top:704px" width="7" height="21" viewBox="0 0 7 21"><rect x="0" y="0" width="7" height="21" fill="#e6e6e6"/><path d="M0.5 9.5 L0.5 0.5 L6.5 0.5" stroke="#fff" fill="none"/><path d="M0.5 10.5 L6.5 10.5 L6.5 0.5" stroke="#8a8a8a" fill="none" stroke-width="0.8"/><path d="M0.5 20.5 L6.5 20.5 L6.5 11" stroke="#8a8a8a" fill="none" stroke-width="0.8"/><path d="M1.2 7 L3.5 2.5 L5.8 7 Z" fill="#6a6a6a"/><path d="M1.2 14 L3.5 18.5 L5.8 14 Z" fill="#6a6a6a"/></svg>
<div class="a" style="left:225px;top:703px;width:51px;height:23px;background:#fff;border:1px solid #c6c6c6;border-top-color:#a2a2a2;border-left-color:#a2a2a2"></div><div class="t" style="left:228px;top:705px;font-size:13px;line-height:19px;height:19px;color:#8c8c8c">10</div>
<div class="t" style="left:22px;top:733px;color:#8c8c8c">触发</div>
<div class="t" style="left:78px;top:733px;color:#8c8c8c">超时</div>
<div class="t" style="left:135px;top:733px;color:#8c8c8c">输出线路</div>
<div class="t" style="left:218px;top:733px;color:#8c8c8c">输出脉宽</div>
<div class="a" style="left:22px;top:751px;width:54px;height:22px;background:#fff"></div>
<div class="a" style="left:58px;top:752px;width:17px;height:20px;background:#f0f0f0;border:1px solid #d2d2d2"></div>
<svg class="a" style="left:61.5px;top:758.5px" width="10" height="7" viewBox="0 0 10 7"><path d="M1 1.5 L5 5.5 L9 1.5" fill="none" stroke="#9a9a9a" stroke-width="1.1"/></svg>
<div class="t" style="left:24.5px;top:753.0px;font-size:13px;line-height:18px;height:18px;color:#8c8c8c">关</div>
<svg class="a" style="left:78px;top:752px" width="7" height="21" viewBox="0 0 7 21"><rect x="0" y="0" width="7" height="21" fill="#e6e6e6"/><path d="M0.5 9.5 L0.5 0.5 L6.5 0.5" stroke="#fff" fill="none"/><path d="M0.5 10.5 L6.5 10.5 L6.5 0.5" stroke="#8a8a8a" fill="none" stroke-width="0.8"/><path d="M0.5 20.5 L6.5 20.5 L6.5 11" stroke="#8a8a8a" fill="none" stroke-width="0.8"/><path d="M1.2 7 L3.5 2.5 L5.8 7 Z" fill="#6a6a6a"/><path d="M1.2 14 L3.5 18.5 L5.8 14 Z" fill="#6a6a6a"/></svg>
<div class="a" style="left:85px;top:751px;width:49px;height:23px;background:#fff;border:1px solid #c6c6c6;border-top-color:#a2a2a2;border-left-color:#a2a2a2"></div><div class="t" style="left:88px;top:753px;font-size:13px;line-height:19px;height:19px;color:#8c8c8c">200</div>
<div class="a" style="left:135px;top:751px;width:79px;height:22px;background:#fff"></div>
<div class="a" style="left:197px;top:752px;width:17px;height:20px;background:#f0f0f0;border:1px solid #d2d2d2"></div>
<svg class="a" style="left:200.5px;top:758.5px" width="10" height="7" viewBox="0 0 10 7"><path d="M1 1.5 L5 5.5 L9 1.5" fill="none" stroke="#9a9a9a" stroke-width="1.1"/></svg>
<div class="t" style="left:138px;top:754.0px;font-size:13px;line-height:18px;height:18px;color:#8c8c8c">Line1</div>
<svg class="a" style="left:218px;top:752px" width="7" height="21" viewBox="0 0 7 21"><rect x="0" y="0" width="7" height="21" fill="#e6e6e6"/><path d="M0.5 9.5 L0.5 0.5 L6.5 0.5" stroke="#fff" fill="none"/><path d="M0.5 10.5 L6.5 10.5 L6.5 0.5" stroke="#8a8a8a" fill="none" stroke-width="0.8"/><path d="M0.5 20.5 L6.5 20.5 L6.5 11" stroke="#8a8a8a" fill="none" stroke-width="0.8"/><path d="M1.2 7 L3.5 2.5 L5.8 7 Z" fill="#6a6a6a"/><path d="M1.2 14 L3.5 18.5 L5.8 14 Z" fill="#6a6a6a"/></svg>
<div class="a" style="left:225px;top:751px;width:51px;height:23px;background:#fff;border:1px solid #c6c6c6;border-top-color:#a2a2a2;border-left-color:#a2a2a2"></div><div class="t" style="left:228px;top:753px;font-size:13px;line-height:19px;height:19px;color:#8c8c8c">100</div>
<div class="tb" style="left:14px;top:784px;width:81px;height:45px;line-height:45px;background:#f0f0f0;border-color:#d4d4d4;color:#a3a3a3">单帧采集</div>
<div class="tb" style="left:103px;top:784px;width:81px;height:45px;line-height:45px;">定义ROI</div>
<div class="tb" style="left:192px;top:784px;width:81px;height:45px;line-height:45px;">输出脉冲</div>
<div class="tb" style="left:14px;top:831px;width:81px;height:45px;line-height:45px;background:#f0f0f0;border-color:#d4d4d4;color:#a3a3a3">连续采集</div>
<div class="tb" style="left:103px;top:831px;width:81px;height:45px;line-height:45px;">保存模型</div>
<div class="tb" style="left:192px;top:831px;width:81px;height:45px;line-height:45px;">获取模型参数</div>
<div class="tb" style="left:14px;top:878px;width:81px;height:45px;line-height:45px;">打开图像</div>
<div class="tb" style="left:103px;top:878px;width:81px;height:45px;line-height:45px;">图像分析</div>
<div class="t" style="left:192px;top:883px;font-size:12px">耗时ms</div>
<div class="a" style="left:191px;top:900px;width:83px;height:24px;background:#f0f0f0;border:1px solid #b4b4b4"></div>
<div class="t" style="left:196px;top:904px;font-size:12px">347.433</div>
<div class="a" style="left:5.5px;top:914.5px;white-space:nowrap;color:#0000ff;font-weight:bold;font-size:21px;line-height:28px;height:28px;font-size:21.3px">石鑫华视觉论坛</div>
<div class="a" style="left:5px;top:943px;white-space:nowrap;color:#0000ff;font-weight:bold;font-size:21px;line-height:28px;height:28px;font-size:23px;letter-spacing:-0.6px">visionbbs.com</div>
<div class="t" style="left:281.5px;top:660px;">图像参数</div>
<div class="a" style="left:282px;top:680px;width:476px;height:274px;background:#b4b4b4;border:1px solid #666;box-shadow:inset 0 0 0 1px #a9a9a9, inset 0 0 0 2px #707070"></div>
<div class="t" style="left:286px;top:685px;font-size:13px">ROI</div>
<div class="a" style="left:285px;top:704px;width:179px;height:243px;background:#b4b4b4;border-style:solid;border-width:4px;border-color:#9c9c9c #c6c6c6 #c6c6c6 #9c9c9c"></div>
<div class="t" style="left:331px;top:710px;font-size:13px">Global Rectangle</div>
<div class="a" style="left:302px;top:727px;width:28px;height:27px;background:#b4b4b4;border-style:solid;border-width:4px;border-color:#9c9c9c #c6c6c6 #c6c6c6 #9c9c9c"></div>
<div class="a" style="left:306px;top:731px;width:20px;height:19px;background:#fff"></div>
<svg class="a" style="left:289.5px;top:724px" width="14" height="29" viewBox="0 0 14 29"><defs><radialGradient id="k2895_724" cx="0.35" cy="0.3" r="0.75"><stop offset="0" stop-color="#e6e6e6"/><stop offset="0.55" stop-color="#cecece"/><stop offset="1" stop-color="#9a9a9a"/></radialGradient></defs><ellipse cx="6.6" cy="14.3" rx="6.1" ry="13.6" fill="#6e6e6e"/><ellipse cx="6.2" cy="14" rx="5.9" ry="13.5" fill="url(#k2895_724)"/><path d="M0.6 13.6 L11.8 13.6" stroke="#8e8e8e" stroke-width="0.9"/><path d="M0.6 14.5 L11.8 14.5" stroke="#ececec" stroke-width="0.8"/><path d="M4 10.6 L6.3 5.2" fill="none" stroke="#2a2a2a" stroke-width="1.1"/><path d="M6.3 5.2 L8.4 10.6 L4 10.6" fill="none" stroke="#f0f0f0" stroke-width="0.8"/><path d="M8.6 17.6 L4 17.6 L6.3 23" fill="none" stroke="#2a2a2a" stroke-width="1.1"/><path d="M6.3 23 L8.6 17.6" fill="none" stroke="#f0f0f0" stroke-width="0.8"/></svg>
<div class="t" style="left:308px;top:732px;font-size:13px;line-height:17px;height:17px;">0</div>
<div class="a" style="left:330px;top:728px;width:73px;height:35px;background:#b4b4b4;border-style:solid;border-width:4px;border-color:#9c9c9c #c6c6c6 #c6c6c6 #9c9c9c"></div>
<div class="a" style="left:345px;top:732px;width:54px;height:27px;background:#b4b4b4;border-style:solid;border-width:4px;border-color:#a2a2a2 #c0c0c0 #c0c0c0 #a2a2a2"></div>
<div class="a" style="left:349px;top:736px;width:46px;height:19px;background:#d0d0d0"></div>
<svg class="a" style="left:334px;top:731px" width="14" height="29" viewBox="0 0 14 29"><defs><radialGradient id="k3340_731" cx="0.35" cy="0.3" r="0.75"><stop offset="0" stop-color="#d2d2d2"/><stop offset="0.55" stop-color="#c4c4c4"/><stop offset="1" stop-color="#a8a8a8"/></radialGradient></defs><ellipse cx="6.6" cy="14.3" rx="6.1" ry="13.6" fill="#9c9c9c"/><ellipse cx="6.2" cy="14" rx="5.9" ry="13.5" fill="url(#k3340_731)"/><path d="M0.6 13.6 L11.8 13.6" stroke="#8e8e8e" stroke-width="0.9"/><path d="M0.6 14.5 L11.8 14.5" stroke="#ececec" stroke-width="0.8"/><path d="M4 10.6 L6.3 5.2" fill="none" stroke="#8c8c8c" stroke-width="1.1"/><path d="M6.3 5.2 L8.4 10.6 L4 10.6" fill="none" stroke="#f0f0f0" stroke-width="0.8"/><path d="M8.6 17.6 L4 17.6 L6.3 23" fill="none" stroke="#8c8c8c" stroke-width="1.1"/><path d="M6.3 23 L8.6 17.6" fill="none" stroke="#f0f0f0" stroke-width="0.8"/></svg>
<div class="t" style="left:352px;top:737px;font-size:13px;line-height:17px;height:17px;color:#7e7e7e">0</div>
<div class="t" style="left:331px;top:765px;font-size:13px">Contours</div>
<div class="a" style="left:302px;top:782px;width:28px;height:27px;background:#b4b4b4;border-style:solid;border-width:4px;border-color:#9c9c9c #c6c6c6 #c6c6c6 #9c9c9c"></div>
<div class="a" style="left:306px;top:786px;width:20px;height:19px;background:#fff"></div>
<svg class="a" style="left:289.5px;top:779px" width="14" height="29" viewBox="0 0 14 29"><defs><radialGradient id="k2895_779" cx="0.35" cy="0.3" r="0.75"><stop offset="0" stop-color="#e6e6e6"/><stop offset="0.55" stop-color="#cecece"/><stop offset="1" stop-color="#9a9a9a"/></radialGradient></defs><ellipse cx="6.6" cy="14.3" rx="6.1" ry="13.6" fill="#6e6e6e"/><ellipse cx="6.2" cy="14" rx="5.9" ry="13.5" fill="url(#k2895_779)"/><path d="M0.6 13.6 L11.8 13.6" stroke="#8e8e8e" stroke-width="0.9"/><path d="M0.6 14.5 L11.8 14.5" stroke="#ececec" stroke-width="0.8"/><path d="M4 10.6 L6.3 5.2" fill="none" stroke="#2a2a2a" stroke-width="1.1"/><path d="M6.3 5.2 L8.4 10.6 L4 10.6" fill="none" stroke="#f0f0f0" stroke-width="0.8"/><path d="M8.6 17.6 L4 17.6 L6.3 23" fill="none" stroke="#2a2a2a" stroke-width="1.1"/><path d="M6.3 23 L8.6 17.6" fill="none" stroke="#f0f0f0" stroke-width="0.8"/></svg>
<div class="t" style="left:308px;top:787px;font-size:13px;line-height:17px;height:17px;">0</div>
<div class="a" style="left:330px;top:783px;width:130px;height:161px;background:#b4b4b4;border-style:solid;border-width:4px;border-color:#9c9c9c #c6c6c6 #c6c6c6 #9c9c9c"></div>
<div class="a" style="left:334px;top:787px;width:123px;height:154px;background:#b4b4b4;border-style:solid;border-width:4px;border-color:#a4a4a4 #bebebe #bebebe #a4a4a4"></div>
<div class="t" style="left:350px;top:792px;color:#7e7e7e;font-size:13px">Contour Type</div>
<div class="a" style="left:349px;top:809px;width:54px;height:27px;background:#b4b4b4;border-style:solid;border-width:4px;border-color:#a2a2a2 #c0c0c0 #c0c0c0 #a2a2a2"></div>
<div class="a" style="left:353px;top:813px;width:46px;height:19px;background:#d0d0d0"></div>
<svg class="a" style="left:338px;top:808px" width="14" height="29" viewBox="0 0 14 29"><defs><radialGradient id="k3380_808" cx="0.35" cy="0.3" r="0.75"><stop offset="0" stop-color="#d2d2d2"/><stop offset="0.55" stop-color="#c4c4c4"/><stop offset="1" stop-color="#a8a8a8"/></radialGradient></defs><ellipse cx="6.6" cy="14.3" rx="6.1" ry="13.6" fill="#9c9c9c"/><ellipse cx="6.2" cy="14" rx="5.9" ry="13.5" fill="url(#k3380_808)"/><path d="M0.6 13.6 L11.8 13.6" stroke="#8e8e8e" stroke-width="0.9"/><path d="M0.6 14.5 L11.8 14.5" stroke="#ececec" stroke-width="0.8"/><path d="M4 10.6 L6.3 5.2" fill="none" stroke="#8c8c8c" stroke-width="1.1"/><path d="M6.3 5.2 L8.4 10.6 L4 10.6" fill="none" stroke="#f0f0f0" stroke-width="0.8"/><path d="M8.6 17.6 L4 17.6 L6.3 23" fill="none" stroke="#8c8c8c" stroke-width="1.1"/><path d="M6.3 23 L8.6 17.6" fill="none" stroke="#f0f0f0" stroke-width="0.8"/></svg>
<div class="t" style="left:356px;top:814px;font-size:13px;line-height:17px;height:17px;color:#7e7e7e">0</div>
<div class="t" style="left:350px;top:838px;color:#7e7e7e;font-size:13px">ROI Type</div>
<div class="a" style="left:349px;top:855px;width:54px;height:27px;background:#b4b4b4;border-style:solid;border-width:4px;border-color:#a2a2a2 #c0c0c0 #c0c0c0 #a2a2a2"></div>
<div class="a" style="left:353px;top:859px;width:46px;height:19px;background:#d0d0d0"></div>
<svg class="a" style="left:338px;top:854px" width="14" height="29" viewBox="0 0 14 29"><defs><radialGradient id="k3380_854" cx="0.35" cy="0.3" r="0.75"><stop offset="0" stop-color="#d2d2d2"/><stop offset="0.55" stop-color="#c4c4c4"/><stop offset="1" stop-color="#a8a8a8"/></radialGradient></defs><ellipse cx="6.6" cy="14.3" rx="6.1" ry="13.6" fill="#9c9c9c"/><ellipse cx="6.2" cy="14" rx="5.9" ry="13.5" fill="url(#k3380_854)"/><path d="M0.6 13.6 L11.8 13.6" stroke="#8e8e8e" stroke-width="0.9"/><path d="M0.6 14.5 L11.8 14.5" stroke="#ececec" stroke-width="0.8"/><path d="M4 10.6 L6.3 5.2" fill="none" stroke="#8c8c8c" stroke-width="1.1"/><path d="M6.3 5.2 L8.4 10.6 L4 10.6" fill="none" stroke="#f0f0f0" stroke-width="0.8"/><path d="M8.6 17.6 L4 17.6 L6.3 23" fill="none" stroke="#8c8c8c" stroke-width="1.1"/><path d="M6.3 23 L8.6 17.6" fill="none" stroke="#f0f0f0" stroke-width="0.8"/></svg>
<div class="t" style="left:356px;top:860px;font-size:13px;line-height:17px;height:17px;color:#7e7e7e">0</div>
<div class="t" style="left:380px;top:884px;color:#7e7e7e;font-size:13px">Points</div>
<div class="a" style="left:350.5px;top:901px;width:28px;height:27px;background:#b4b4b4;border-style:solid;border-width:4px;border-color:#9c9c9c #c6c6c6 #c6c6c6 #9c9c9c"></div>
<div class="a" style="left:354.5px;top:905px;width:20px;height:19px;background:#d0d0d0"></div>
<svg class="a" style="left:338.0px;top:898px" width="14" height="29" viewBox="0 0 14 29"><defs><radialGradient id="k3380_898" cx="0.35" cy="0.3" r="0.75"><stop offset="0" stop-color="#d2d2d2"/><stop offset="0.55" stop-color="#c4c4c4"/><stop offset="1" stop-color="#a8a8a8"/></radialGradient></defs><ellipse cx="6.6" cy="14.3" rx="6.1" ry="13.6" fill="#9c9c9c"/><ellipse cx="6.2" cy="14" rx="5.9" ry="13.5" fill="url(#k3380_898)"/><path d="M0.6 13.6 L11.8 13.6" stroke="#8e8e8e" stroke-width="0.9"/><path d="M0.6 14.5 L11.8 14.5" stroke="#ececec" stroke-width="0.8"/><path d="M4 10.6 L6.3 5.2" fill="none" stroke="#8c8c8c" stroke-width="1.1"/><path d="M6.3 5.2 L8.4 10.6 L4 10.6" fill="none" stroke="#f0f0f0" stroke-width="0.8"/><path d="M8.6 17.6 L4 17.6 L6.3 23" fill="none" stroke="#8c8c8c" stroke-width="1.1"/><path d="M6.3 23 L8.6 17.6" fill="none" stroke="#f0f0f0" stroke-width="0.8"/></svg>
<div class="t" style="left:356.5px;top:906px;font-size:13px;line-height:17px;height:17px;color:#7e7e7e">0</div>
<div class="a" style="left:379px;top:902px;width:73px;height:34px;background:#b4b4b4;border-style:solid;border-width:4px;border-color:#9c9c9c #c6c6c6 #c6c6c6 #9c9c9c"></div>
<div class="a" style="left:394px;top:906px;width:54px;height:27px;background:#b4b4b4;border-style:solid;border-width:4px;border-color:#a2a2a2 #c0c0c0 #c0c0c0 #a2a2a2"></div>
<div class="a" style="left:398px;top:910px;width:46px;height:19px;background:#c2c2c2"></div>
<svg class="a" style="left:383px;top:905px" width="14" height="29" viewBox="0 0 14 29"><defs><radialGradient id="k3830_905" cx="0.35" cy="0.3" r="0.75"><stop offset="0" stop-color="#d2d2d2"/><stop offset="0.55" stop-color="#c4c4c4"/><stop offset="1" stop-color="#a8a8a8"/></radialGradient></defs><ellipse cx="6.6" cy="14.3" rx="6.1" ry="13.6" fill="#9c9c9c"/><ellipse cx="6.2" cy="14" rx="5.9" ry="13.5" fill="url(#k3830_905)"/><path d="M0.6 13.6 L11.8 13.6" stroke="#8e8e8e" stroke-width="0.9"/><path d="M0.6 14.5 L11.8 14.5" stroke="#ececec" stroke-width="0.8"/><path d="M4 10.6 L6.3 5.2" fill="none" stroke="#8c8c8c" stroke-width="1.1"/><path d="M6.3 5.2 L8.4 10.6 L4 10.6" fill="none" stroke="#f0f0f0" stroke-width="0.8"/><path d="M8.6 17.6 L4 17.6 L6.3 23" fill="none" stroke="#8c8c8c" stroke-width="1.1"/><path d="M6.3 23 L8.6 17.6" fill="none" stroke="#f0f0f0" stroke-width="0.8"/></svg>
<div class="t" style="left:401px;top:911px;font-size:13px;line-height:17px;height:17px;color:#9a9a9a">0</div>
<div class="t" style="left:465px;top:685px;font-size:12px">深度OCR参数</div>
<div class="a" style="left:464px;top:704px;width:290px;height:228px;background:#b4b4b4;border-style:solid;border-width:4px;border-color:#9c9c9c #c6c6c6 #c6c6c6 #9c9c9c"></div>
<div class="t" style="left:469px;top:710px;">模型文件</div>
<div class="a" style="left:469px;top:729px;width:242px;height:22px;background:#fff"></div>
<div class="t" style="left:473px;top:732px;font-size:12px;letter-spacing:0.55px">D:\工作文档\网站文章\图像\Halcon\</div>
<div class="a" style="left:716px;top:730px;width:29px;height:16px;background:#d6d6d6;border:1px solid #e8e8e8;border-right-color:#9a9a9a;border-bottom-color:#9a9a9a"></div>
<svg class="a" style="left:722px;top:731px" width="18" height="14" viewBox="0 0 18 14"><path d="M1.5 12 L1.5 2.5 L3 1.2 L7 1.2 L8.2 2.6 L13 2.6 L13 5" fill="#ffe000" stroke="#000" stroke-width="1"/><path d="M1.5 12 L4.5 5.2 L17 5.2 L13.6 12 Z" fill="#ffe000" stroke="#000" stroke-width="1.1" stroke-linejoin="round"/></svg>
<div class="t" style="left:469px;top:754px;">模型</div>
<div class="t" style="left:569px;top:754px;">覆盖</div>
<div class="t" style="left:596px;top:754px;">颜色</div>
<div class="t" style="left:623px;top:754px;">字号</div>
<div class="t" style="left:669px;top:754px;">环形ROI基线</div>
<div class="a" style="left:469px;top:772px;width:98px;height:21px;background:#fff"></div>
<div class="a" style="left:549px;top:773px;width:16px;height:19px;background:#e9e9e9;border:1px solid #b2b2b2"></div>
<svg class="a" style="left:552.0px;top:779.0px" width="10" height="7" viewBox="0 0 10 7"><path d="M1 1.5 L5 5.5 L9 1.5" fill="none" stroke="#4a4a4a" stroke-width="1.1"/></svg>
<div class="t" style="left:473px;top:773.5px;font-size:13px;line-height:18px;height:18px;color:#000">自动</div>
<div class="a" style="left:568px;top:772px;width:13px;height:13px;background:#fff;border:1px solid #333"></div>
<svg class="a" style="left:569px;top:773px" width="11" height="11" viewBox="0 0 11 11"><path d="M1.8 5.4 L4.4 8 L9.4 2.2" fill="none" stroke="#222" stroke-width="1.1"/></svg>
<div class="a" style="left:597px;top:773px;width:24px;height:24px;background:#66ff00;border-style:solid;border-width:2px 3px 3px 2px;border-color:#7a7a7a #8c8c8c #8c8c8c #7a7a7a"></div>
<div class="a" style="left:623px;top:774px;width:44px;height:22px;background:#fff"></div>
<div class="t" style="left:627px;top:777px;font-size:13px">30</div>
<div class="a" style="left:652px;top:775px;width:14px;height:10px;background:#ececec;border:1px solid #b8b8b8"></div>
<div class="a" style="left:652px;top:785px;width:14px;height:10px;background:#ececec;border:1px solid #b8b8b8"></div>
<svg class="a" style="left:655px;top:778px" width="8" height="14" viewBox="0 0 8 14"><path d="M1 4 L4 0.8 L7 4 Z M1 10 L4 13.2 L7 10 Z" fill="#111"/></svg>
<div class="a" style="left:669px;top:774px;width:74px;height:22px;background:#fff"></div>
<div class="a" style="left:725px;top:775px;width:17px;height:20px;background:#e9e9e9;border:1px solid #b2b2b2"></div>
<svg class="a" style="left:728.5px;top:781.5px" width="10" height="7" viewBox="0 0 10 7"><path d="M1 1.5 L5 5.5 L9 1.5" fill="none" stroke="#4a4a4a" stroke-width="1.1"/></svg>
<div class="t" style="left:672px;top:776.0px;font-size:12px;line-height:18px;height:18px;color:#000">基线在内</div>
<div class="t" style="left:469px;top:796px;">参数</div>
<div class="a" style="left:481px;top:817px;width:28px;height:27px;background:#b4b4b4;border-style:solid;border-width:4px;border-color:#9c9c9c #c6c6c6 #c6c6c6 #9c9c9c"></div>
<div class="a" style="left:485px;top:821px;width:20px;height:19px;background:#fff"></div>
<svg class="a" style="left:468.5px;top:814px" width="14" height="29" viewBox="0 0 14 29"><defs><radialGradient id="k4685_814" cx="0.35" cy="0.3" r="0.75"><stop offset="0" stop-color="#e6e6e6"/><stop offset="0.55" stop-color="#cecece"/><stop offset="1" stop-color="#9a9a9a"/></radialGradient></defs><ellipse cx="6.6" cy="14.3" rx="6.1" ry="13.6" fill="#6e6e6e"/><ellipse cx="6.2" cy="14" rx="5.9" ry="13.5" fill="url(#k4685_814)"/><path d="M0.6 13.6 L11.8 13.6" stroke="#8e8e8e" stroke-width="0.9"/><path d="M0.6 14.5 L11.8 14.5" stroke="#ececec" stroke-width="0.8"/><path d="M4 10.6 L6.3 5.2" fill="none" stroke="#2a2a2a" stroke-width="1.1"/><path d="M6.3 5.2 L8.4 10.6 L4 10.6" fill="none" stroke="#f0f0f0" stroke-width="0.8"/><path d="M8.6 17.6 L4 17.6 L6.3 23" fill="none" stroke="#2a2a2a" stroke-width="1.1"/><path d="M6.3 23 L8.6 17.6" fill="none" stroke="#f0f0f0" stroke-width="0.8"/></svg>
<div class="t" style="left:487px;top:822px;font-size:13px;line-height:17px;height:17px;">0</div>
<div class="a" style="left:509px;top:817px;width:240px;height:111px;background:#b4b4b4;border-style:solid;border-width:4px;border-color:#9c9c9c #c6c6c6 #c6c6c6 #9c9c9c"></div>
<div class="a" style="left:513px;top:821px;width:232px;height:103px;background:#b4b4b4;border-style:solid;border-width:4px;border-color:#a4a4a4 #bebebe #bebebe #a4a4a4"></div>
<div class="t" style="left:518px;top:827px;">参数名称</div>
<div class="a" style="left:518px;top:846px;width:223px;height:26px;background:#fff"></div>
<div class="a" style="left:723px;top:848px;width:17px;height:22px;background:#e9e9e9;border:1px solid #b2b2b2"></div>
<svg class="a" style="left:726.5px;top:855.5px" width="10" height="7" viewBox="0 0 10 7"><path d="M1 1.5 L5 5.5 L9 1.5" fill="none" stroke="#4a4a4a" stroke-width="1.1"/></svg>
<div class="t" style="left:523px;top:848.5px;font-size:13px;line-height:18px;height:18px;color:#000">runtime</div>
<div class="t" style="left:518px;top:875px;">参数值</div>
<div class="t" style="left:654px;top:875px;">参数值类型</div>
<div class="a" style="left:518px;top:894px;width:134px;height:26px;background:#fff"></div>
<div class="a" style="left:635px;top:895px;width:17px;height:24px;background:#e9e9e9;border:1px solid #b2b2b2"></div>
<svg class="a" style="left:638.5px;top:903.5px" width="10" height="7" viewBox="0 0 10 7"><path d="M1 1.5 L5 5.5 L9 1.5" fill="none" stroke="#4a4a4a" stroke-width="1.1"/></svg>
<div class="t" style="left:523px;top:896.5px;font-size:13px;line-height:18px;height:18px;color:#000">gpu</div>
<div class="a" style="left:654px;top:894px;width:87px;height:25px;background:#fff"></div>
<div class="a" style="left:722px;top:895px;width:18px;height:24px;background:#e9e9e9;border:1px solid #b2b2b2"></div>
<svg class="a" style="left:726.0px;top:903.5px" width="10" height="7" viewBox="0 0 10 7"><path d="M1 1.5 L5 5.5 L9 1.5" fill="none" stroke="#4a4a4a" stroke-width="1.1"/></svg>
<div class="t" style="left:657px;top:896.0px;font-size:12px;line-height:18px;height:18px;color:#000">字符串</div>
<div class="t" style="left:761px;top:661px;">识别字符</div>
<div class="a" style="left:760px;top:679px;width:289px;height:279px;background:#f4f4f4;border-style:solid;border-width:3px 2px 2px 3px;border-color:#a8a8a8 #666 #5c5c5c #a8a8a8;box-shadow:inset 0 1px 0 0 #6e6e6e"></div>
<div class="a" style="left:763px;top:765px;width:266px;height:2px;background:linear-gradient(#b4b4b4,#8e8e8e)"></div>
<div class="a" style="left:763px;top:786px;width:266px;height:2px;background:linear-gradient(#b4b4b4,#8e8e8e)"></div>
<div class="a" style="left:763px;top:807px;width:266px;height:2px;background:linear-gradient(#b4b4b4,#8e8e8e)"></div>
<div class="a" style="left:763px;top:828px;width:266px;height:2px;background:linear-gradient(#b4b4b4,#8e8e8e)"></div>
<div class="a" style="left:763px;top:849px;width:266px;height:2px;background:linear-gradient(#b4b4b4,#8e8e8e)"></div>
<div class="a" style="left:763px;top:870px;width:266px;height:2px;background:linear-gradient(#b4b4b4,#8e8e8e)"></div>
<div class="a" style="left:763px;top:891px;width:266px;height:2px;background:linear-gradient(#b4b4b4,#8e8e8e)"></div>
<div class="a" style="left:763px;top:912px;width:266px;height:2px;background:linear-gradient(#b4b4b4,#8e8e8e)"></div>
<div class="a" style="left:763px;top:933px;width:266px;height:2px;background:linear-gradient(#b4b4b4,#8e8e8e)"></div>
<div class="a" style="left:763px;top:954px;width:266px;height:2px;background:linear-gradient(#b4b4b4,#8e8e8e)"></div>
<div class="a" style="left:1028px;top:682px;width:1px;height:273px;background:#b8b8b8"></div>
<div class="a" style="left:763px;top:682px;width:266px;height:21px;background:#fff;border:1px solid #000"></div>
<div class="t" style="left:766px;top:685px;font-size:12px">19FO</div>
<div class="a" style="left:763px;top:703px;width:266px;height:21px;background:#fff;border:1px solid #000"></div>
<div class="t" style="left:766px;top:706px;font-size:12px">P625L40</div>
<div class="a" style="left:763px;top:724px;width:266px;height:21px;background:#fff;border:1px solid #000"></div>
<div class="t" style="left:766px;top:727px;font-size:12px">1142</div>
<div class="a" style="left:763px;top:681px;width:266px;height:1px;background:#000"></div>
<div class="a" style="left:1029px;top:682px;width:17px;height:273px;background:#f0f0f0"></div>
<svg class="a" style="left:1031px;top:685px" width="12" height="12" viewBox="-6 -6 12 12"><path d="M-3.3 2 L0 -1.5 L3.3 2" fill="none" stroke="#505050" stroke-width="1.9"/></svg>
<svg class="a" style="left:1031px;top:940px" width="12" height="12" viewBox="-6 -6 12 12"><path d="M-3.3 -2 L0 1.5 L3.3 -2" fill="none" stroke="#505050" stroke-width="1.9"/></svg>
<div class="a" style="left:1056px;top:626px;width:268px;height:338px;background:#fff;border:1px solid #828790"></div>
<div class="t" style="left:1063px;top:628px;height:18px;line-height:18px">初始化程序<span style="letter-spacing:0.29px">,2026-03-24 08:31:32</span></div>
<div class="t" style="left:1063px;top:646px;height:18px;line-height:18px">初始化控件<span style="letter-spacing:0.29px">,2026-03-24 08:31:32</span></div>
<div class="t" style="left:1063px;top:664px;height:18px;line-height:18px">加载机种参数<span style="letter-spacing:0.29px">,2026-03-24 08:31:32</span></div>
<div class="t" style="left:1063px;top:682px;height:18px;line-height:18px">初始化机种参数<span style="letter-spacing:0.29px">,2026-03-24 08:31:32</span></div>
<div class="t" style="left:1063px;top:700px;height:18px;line-height:18px">设置参数<span style="letter-spacing:0.29px">,2026-03-24 08:31:38</span></div>
<div class="t" style="left:1063px;top:718px;height:18px;line-height:18px">打开图像<span style="letter-spacing:0.29px">,2026-03-24 08:32:22</span></div>
<div class="t" style="left:1063px;top:736px;height:18px;line-height:18px">定义全图<span style="letter-spacing:0.29px">OCR,2026-03-24 08:32:26</span></div>
<div class="t" style="left:1063px;top:754px;height:18px;line-height:18px">图像分析耗时<span style="letter-spacing:0.29px">778.2ms,2026-03-24 08:32:28</span></div>
<div class="t" style="left:1063px;top:772px;height:18px;line-height:18px">打开图像<span style="letter-spacing:0.29px">,2026-03-24 08:32:34</span></div>
<div class="t" style="left:1063px;top:790px;height:18px;line-height:18px">图像分析耗时<span style="letter-spacing:0.29px">304.2ms,2026-03-24 08:32:35</span></div>
<div class="t" style="left:1063px;top:808px;height:18px;line-height:18px">定义兴趣区域<span style="letter-spacing:0.29px">OCR,2026-03-24 08:32:43</span></div>
<div class="t" style="left:1063px;top:826px;height:18px;line-height:18px">图像分析耗时<span style="letter-spacing:0.29px">396.0ms,2026-03-24 08:32:44</span></div>
<div class="t" style="left:1063px;top:844px;height:18px;line-height:18px">定义全图<span style="letter-spacing:0.29px">OCR,2026-03-24 08:32:50</span></div>
<div class="t" style="left:1060px;top:862px;height:18px;line-height:18px;background:#0078d7;color:#fff;padding:0 2px 0 3px">图像分析耗时<span style="letter-spacing:0.29px">347.4ms,2026-03-24 08:32:50</span></div>
</body></html>
